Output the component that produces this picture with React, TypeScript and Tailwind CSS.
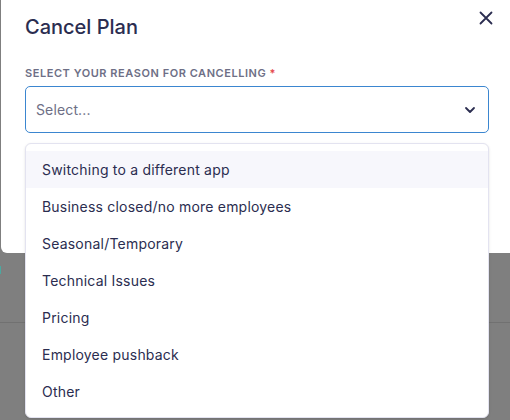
import React from "react";

const options = [
  "Switching to a different app",
  "Business closed/no more employees",
  "Seasonal/Temporary",
  "Technical Issues",
  "Pricing",
  "Employee pushback",
  "Other",
];

export default function App() {
  return (
    <div
      className="relative w-[510px] h-[420px] overflow-hidden bg-[#7f7f7f]"
      style={{ fontFamily: "Inter, 'Noto Sans', sans-serif" }}
    >
      <div className="relative ml-[1px] h-[253px] rounded-bl-md bg-white px-6">
        <div className="flex items-start justify-between pt-[13px]">
          <h1 className="text-[20px] font-medium leading-[28px] text-[#2b2d50]">Cancel Plan</h1>
          <button className="mr-[-7px] mt-[-2px] text-[#2b2d50]" aria-label="Close">
            <svg width="14" height="14" viewBox="0 0 14 14" fill="none">
              <path d="M1.5 1.5L12.5 12.5M12.5 1.5L1.5 12.5" stroke="currentColor" strokeWidth="1.8" strokeLinecap="round" />
            </svg>
          </button>
        </div>
        <div className="mt-[25px] text-[11px] font-semibold uppercase leading-[14px] tracking-[0.05em] text-[#6e6f86]">
          Select your reason for cancelling <span className="text-[#e5484d]">*</span>
        </div>
        <div className="mt-[6px] flex h-[47px] w-[464px] items-center justify-between rounded-[5px] border border-[#3b86d0] pl-[10px] pr-[12px]">
          <span className="text-[14px] tracking-[0.01em] text-[#6e6f86]">Select...</span>
          <svg width="12" height="8" viewBox="0 0 12 8" fill="none">
            <path d="M2 2L6 6L10 2" stroke="#2b2d50" strokeWidth="1.8" strokeLinecap="round" strokeLinejoin="round" />
          </svg>
        </div>
      </div>
      <div className="absolute left-0 top-[266px] h-[8px] w-[1px] bg-[#4ba8a0]" />
      <div className="mt-[69px] h-[1px] w-full bg-[#717171]" />

      <div className="absolute left-[25px] top-[143px] w-[464px] rounded-[6px] border border-[#e3e3f0] bg-white py-[7px] shadow-sm">
        {options.map((o, i) => (
          <div
            key={o}
            className={`flex h-[37px] items-center px-4 text-[14px] tracking-[0.015em] text-[#2b2d50] ${i === 0 ? "bg-[#f7f7fc]" : ""}`}
          >
            {o}
          </div>
        ))}
      </div>
    </div>
  );
}
